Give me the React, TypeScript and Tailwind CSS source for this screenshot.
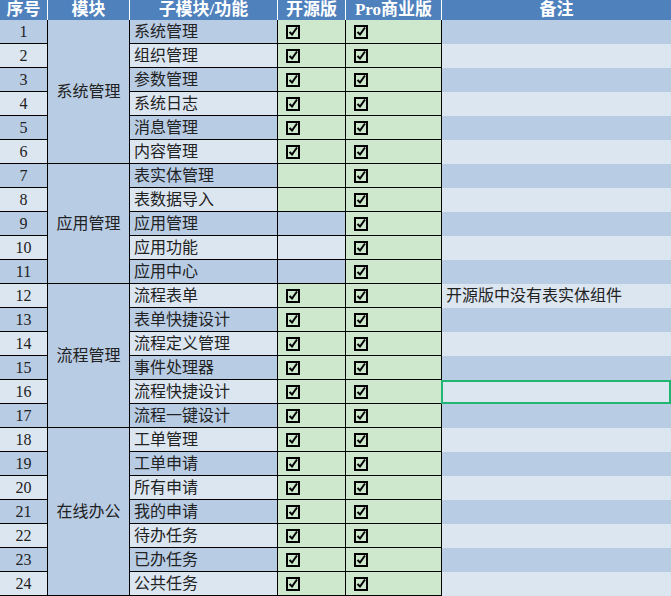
const subs = [
  "系统管理", "组织管理", "参数管理", "系统日志", "消息管理", "内容管理",
  "表实体管理", "表数据导入", "应用管理", "应用功能", "应用中心",
  "流程表单", "表单快捷设计", "流程定义管理", "事件处理器", "流程快捷设计", "流程一键设计",
  "工单管理", "工单申请", "所有申请", "我的申请", "待办任务", "已办任务", "公共任务",
];

const groups = [
  { name: "系统管理", start: 1, span: "row-span-6" },
  { name: "应用管理", start: 7, span: "row-span-5" },
  { name: "流程管理", start: 12, span: "row-span-6" },
  { name: "在线办公", start: 18, span: "row-span-7" },
];

const rowStart = [
  "", "row-start-2", "row-start-3", "row-start-4", "row-start-5", "row-start-6", "row-start-7",
  "row-start-8", "row-start-9", "row-start-10", "row-start-11", "row-start-12", "row-start-13",
  "row-start-14", "row-start-15", "row-start-16", "row-start-17", "row-start-18", "row-start-19",
  "row-start-20", "row-start-21", "row-start-22", "row-start-23", "row-start-24", "row-start-25",
];

function Check() {
  return (
    <svg width="14" height="14" viewBox="0 0 14 14">
      <rect x="1" y="1" width="12" height="12" fill="none" stroke="#000" strokeWidth="2" />
      <path d="M3.5 7 L6 9.5 L11 2.5" fill="none" stroke="#000" strokeWidth="2" />
    </svg>
  );
}

export default function App() {
  const head = "bg-[#4f81bd] text-white font-bold text-[17px] flex items-center justify-center border-r border-white";
  return (
    <div
      className="w-[671px] h-[596px] overflow-hidden bg-white text-[#222] text-[16px]"
      style={{ fontFamily: '"Liberation Serif", "Noto Sans CJK SC", serif' }}
    >
      <div className="grid grid-cols-[48px_82px_148px_68px_96px_229px] grid-rows-[20px_repeat(24,24px)]">
        <div className={`${head} col-start-1 row-start-1`}>序号</div>
        <div className={`${head} col-start-2 row-start-1`}>模块</div>
        <div className={`${head} col-start-3 row-start-1`}>子模块/功能</div>
        <div className={`${head} col-start-4 row-start-1`}>开源版</div>
        <div className={`${head} col-start-5 row-start-1`}>Pro商业版</div>
        <div className={`${head} col-start-6 row-start-1 border-r-0`}>备注</div>

        {groups.map((g) => (
          <div
            key={g.name}
            className={`col-start-2 ${rowStart[g.start]} ${g.span} bg-[#b8cce4] border-r border-b border-black flex items-center justify-center`}
          >
            {g.name}
          </div>
        ))}

        {subs.map((s, i) => {
          const n = i + 1;
          const bg = n % 2 === 1 ? "bg-[#b8cce4]" : "bg-[#dce6f1]";
          const open = n <= 6 || n >= 12;
          const openBg = n >= 9 && n <= 11 ? bg : "bg-[#cde8cd]";
          const rs = rowStart[n];
          return (
            <div key={s} className="contents">
              <div className={`col-start-1 ${rs} ${bg} border-r border-b border-black flex items-center justify-center`}>{n}</div>
              <div className={`col-start-3 ${rs} ${bg} border-r border-b border-black flex items-center pl-1`}>{s}</div>
              <div className={`col-start-4 ${rs} ${openBg} border-r border-b border-black flex items-center pl-[8px]`}>
                {open && <Check />}
              </div>
              <div className={`col-start-5 ${rs} bg-[#cde8cd] border-r border-b border-black flex items-center pl-[8px]`}>
                <Check />
              </div>
              <div
                className={`col-start-6 ${rs} ${bg} flex items-center pl-[4px] ${n === 16 ? "border-2 border-[#21b573] -ml-px" : ""}`}
              >
                {n === 12 ? "开源版中没有表实体组件" : ""}
              </div>
            </div>
          );
        })}
      </div>
    </div>
  );
}
